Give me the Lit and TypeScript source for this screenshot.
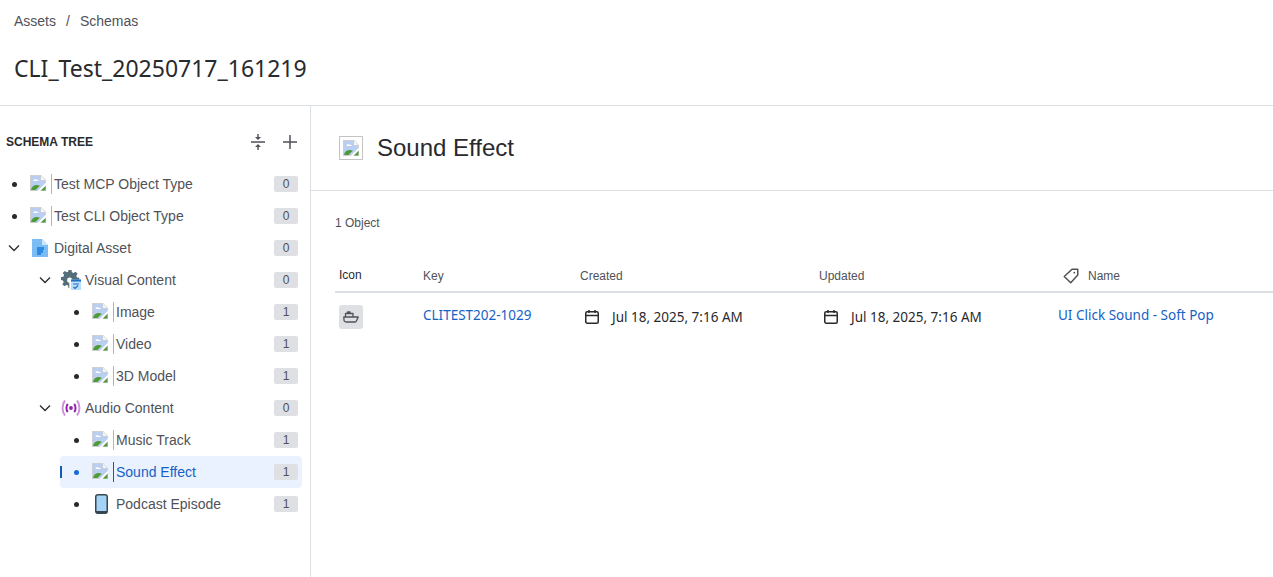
import { LitElement, html, css } from 'lit';
import { customElement } from 'lit/decorators.js';
import { classMap } from 'lit/directives/class-map.js';

type IconKind = 'broken' | 'doc' | 'gear' | 'radio' | 'phone';

interface TreeNode {
  label: string;
  count: number;
  level: number;
  icon: IconKind;
  open?: boolean;
  selected?: boolean;
}

const NODES: TreeNode[] = [
  { label: 'Test MCP Object Type', count: 0, level: 0, icon: 'broken' },
  { label: 'Test CLI Object Type', count: 0, level: 0, icon: 'broken' },
  { label: 'Digital Asset', count: 0, level: 0, icon: 'doc', open: true },
  { label: 'Visual Content', count: 0, level: 1, icon: 'gear', open: true },
  { label: 'Image', count: 1, level: 2, icon: 'broken' },
  { label: 'Video', count: 1, level: 2, icon: 'broken' },
  { label: '3D Model', count: 1, level: 2, icon: 'broken' },
  { label: 'Audio Content', count: 0, level: 1, icon: 'radio', open: true },
  { label: 'Music Track', count: 1, level: 2, icon: 'broken' },
  { label: 'Sound Effect', count: 1, level: 2, icon: 'broken', selected: true },
  { label: 'Podcast Episode', count: 1, level: 2, icon: 'phone' },
];

// chrome's broken image glyph
const brokenImage = html`
  <svg width="16" height="16" viewBox="0 0 16 16">
    <path d="M0 0h11l5 5v11H0z" fill="#cfcfcf" />
    <path d="M1 1h9.500v4.500H15V8.500L8.500 15H1z" fill="#b9cef1" />
    <path d="M11 .8l4.200 4.200H11z" fill="#f6f6f6" />
    <path d="M3.500 5.500c0-1.200 2.200-1.800 3.200-.8 1.100-.2 2 .3 2 1.200H3.500z" fill="#fff" />
    <path d="M1 15c.6-3.400 3.600-5.400 7-4.800l1.800.5L5.500 15z" fill="#4f9a38" />
    <path d="M16 7.500 7.500 16H10l6-6z" fill="#fff" />
    <path d="M15.500 11v4.500H11z" fill="#4f9a38" />
  </svg>
`;

const calendar = html`
  <svg width="16" height="16" viewBox="0 0 16 16" fill="none" stroke="#292a2e" stroke-width="1.500">
    <rect x="1.750" y="2.750" width="12.500" height="11.500" rx="1.500" />
    <path d="M1.750 6.500h12.500M5 1v3M11 1v3" />
  </svg>
`;

@customElement('tree-icon')
export class TreeIcon extends LitElement {
  static properties = { kind: {}, active: { type: Boolean } };
  kind: IconKind = 'broken';
  active = false;

  static styles = css`
    :host {
      display: block;
    }
    .broken {
      box-sizing: border-box;
      width: 22px;
      height: 20px;
      border-right: 1px solid #b4b4b4;
      padding-top: 1px;
      line-height: 0;
    }
    .broken.active {
      border-right-color: #1558bc;
    }
    svg {
      display: block;
    }
  `;

  render() {
    switch (this.kind) {
      case 'doc':
        return html`<svg width="20" height="20" viewBox="0 0 20 20">
          <path d="M2 1h10l6 6v12H2z" fill="#7cbcf4" />
          <path d="M12 1l6 6h-6z" fill="#cfe5fa" />
          <path d="M7 9h7v3H7zM7 12h6v3H7zM7 15h4v2H7z" fill="#2f8ae6" />
        </svg>`;
      case 'gear':
        return html`<svg width="20" height="20" viewBox="0 0 20 20">
          <path
            d="M7.500 0h3l.4 2.300 1.700.7 1.900-1.300 2.100 2.100-1.300 1.900.7 1.700 2.300.4v2.500h-7V9.500a2.700 2.700 0 1 0-3 3.400V18H7.500l-.4-2.400-1.700-.7-2 1.400-2.100-2.100 1.400-2-.7-1.700L0 10.100v-3l2.400-.4.700-1.700-1.400-2 2.100-2.100 2 1.400 1.300-.6z"
            fill="#546e7a"
          />
          <path d="M10 9.500h10V20H10z" fill="#bbdefb" />
          <path d="M10 9.500h10v2H10z" fill="#1e6fc4" />
          <path d="M12 14h6M12.500 17l1.500 1.500 3-3" fill="none" stroke="#1e6fc4" stroke-width="1.200" />
        </svg>`;
      case 'radio':
        return html`<svg width="20" height="18" viewBox="0 0 20 18" fill="none">
          <path d="M4 1.500C.7 5.500.7 12.500 4 16.500M16 1.500c3.300 4 3.300 11 0 15" stroke="#ce93d8" stroke-width="2" />
          <path d="M6.800 5C5 7 5 11 6.800 13M13.200 5c1.800 2 1.800 6 0 8" stroke="#8e24aa" stroke-width="2" />
          <circle cx="10" cy="9" r="1.900" fill="#8e24aa" />
        </svg>`;
      case 'phone':
        return html`<svg width="17" height="20" viewBox="0 0 17 20">
          <rect x="3.750" y="0.750" width="11.500" height="18.500" rx="2.200" fill="#a5d2f7" stroke="#37474f" stroke-width="1.500" />
          <path d="M4 17h11v1a1.500 1.500 0 0 1-1.500 1.500h-8A1.500 1.500 0 0 1 4 18z" fill="#37474f" />
        </svg>`;
      default:
        return html`<div class=${classMap({ broken: true, active: this.active })}>${brokenImage}</div>`;
    }
  }
}

@customElement('app-root')
export class AppRoot extends LitElement {
  static styles = css`
    :host {
      display: block;
      height: 577px;
      overflow: hidden;
      background: #fff;
      color: #292a2e;
      font-family: 'Liberation Sans', Arial, sans-serif;
    }
    .page-head {
      box-sizing: border-box;
      height: 106px;
      padding: 12px 14px 0;
      border-bottom: 1px solid #dcdfe4;
    }
    .crumbs {
      display: flex;
      gap: 10px;
      height: 18px;
      font-size: 14px;
      line-height: 18px;
      color: #505258;
    }
    h1 {
      margin: 21px 0 0;
      font: 400 23px/34px 'Noto Sans', sans-serif;
      color: #292a2e;
    }
    .body {
      display: flex;
      height: 471px;
    }
    .sidebar {
      flex: none;
      box-sizing: border-box;
      width: 311px;
      border-right: 1px solid #dcdfe4;
    }
    .side-head {
      display: flex;
      align-items: center;
      height: 40px;
      margin: 16px 0 6px;
      padding-left: 6px;
      font-size: 12px;
      font-weight: 700;
    }
    .side-head span {
      flex: 1;
    }
    .tool {
      display: flex;
      justify-content: center;
      width: 32px;
    }
    .side-head .tool:last-child {
      margin-right: 4px;
    }
    .tree {
      margin-left: -2px;
    }
    .row {
      position: relative;
      display: flex;
      align-items: center;
      height: 32px;
      padding-right: 4px;
      margin-right: 8px;
      border-radius: 4px;
      font-size: 14px;
      color: #505258;
    }
    .row.selected {
      background: #e9f2fe;
      color: #1662c4;
    }
    .row.selected::before {
      content: '';
      position: absolute;
      left: 0;
      top: 10px;
      width: 2px;
      height: 12px;
      background: #1558bc;
    }
    .twisty {
      flex: none;
      display: flex;
      align-items: center;
      justify-content: center;
      width: 32px;
      height: 32px;
    }
    .dot {
      width: 5px;
      height: 5px;
      border-radius: 50%;
      background: #292a2e;
    }
    .selected .dot {
      background: #1868db;
    }
    .icon {
      flex: none;
      width: 24px;
    }
    .label {
      flex: 1;
    }
    .badge {
      width: 24px;
      height: 16px;
      border-radius: 2px;
      background: #dfe0e3;
      text-align: center;
      font-size: 12px;
      line-height: 16px;
      color: #505258;
    }
    .detail {
      flex: 1;
      min-width: 0;
    }
    .detail-head {
      display: flex;
      align-items: center;
      gap: 14px;
      height: 84px;
      padding-left: 28px;
      border-bottom: 1px solid #dcdfe4;
    }
    .type-box {
      box-sizing: border-box;
      display: flex;
      align-items: center;
      justify-content: center;
      width: 24px;
      height: 24px;
      border: 1px solid #c4c4c4;
    }
    h2 {
      margin: 0;
      font-size: 24px;
      font-weight: 400;
      color: #292a2e;
    }
    .objects {
      padding-left: 24px;
    }
    .total {
      margin: 24px 0 29px;
      font-size: 12px;
      line-height: 16px;
      color: #505258;
    }
    .grid {
      display: grid;
      grid-template-columns: 84px 157px 239px 239px 1fr;
    }
    .th {
      display: flex;
      align-items: center;
      gap: 9px;
      height: 31px;
      padding-left: 4px;
      border-bottom: 2px solid #dcdfe4;
      font-size: 12px;
      color: #505258;
    }
    .th.dark {
      color: #292a2e;
      box-sizing: border-box;
      height: 33px;
      padding-bottom: 1px;
    }
    .th.name {
      padding-left: 9px;
    }
    .td {
      padding: 12px 0 12px 4px;
      font: 13.5px/20px 'Noto Sans', sans-serif;
    }
    .td a {
      color: #1662c4;
      text-decoration: none;
    }
    .obj-icon {
      display: flex;
      align-items: center;
      justify-content: center;
      width: 24px;
      height: 24px;
      border-radius: 3px;
      background: #dfe0e3;
    }
    .date {
      display: flex;
      align-items: center;
      align-self: start;
      gap: 12px;
      padding: 14px 0 0 8px;
      font: 13.5px/20px 'Noto Sans', sans-serif;
      color: #292a2e;
    }
  `;

  private renderNode(node: TreeNode) {
    return html`
      <div class=${classMap({ row: true, selected: !!node.selected })} style="margin-left: ${node.level * 31}px">
        <div class="twisty">
          ${node.open
            ? html`<svg width="16" height="16" viewBox="0 0 16 16" fill="none" stroke="#292a2e" stroke-width="1.300">
                <path d="M3 5.500l5 5 5-5" />
              </svg>`
            : html`<div class="dot"></div>`}
        </div>
        <div class="icon">
          <tree-icon .kind=${node.icon} .active=${!!node.selected}></tree-icon>
        </div>
        <div class="label">${node.label}</div>
        <div class="badge">${node.count}</div>
      </div>
    `;
  }

  render() {
    return html`
      <header class="page-head">
        <nav class="crumbs"><span>Assets</span><span>/</span><span>Schemas</span></nav>
        <h1>CLI_Test_20250717_161219</h1>
      </header>
      <div class="body">
        <aside class="sidebar">
          <div class="side-head">
            <span>SCHEMA TREE</span>
            <div class="tool">
              <svg width="16" height="16" viewBox="0 0 16 16" fill="#505258">
                <path d="M1 7.250h14v1.500H1zM7.300 0h1.400v3H11L8 6 5 3h2.300zM8 10l3 3H8.700v3H7.300v-3H5z" />
              </svg>
            </div>
            <div class="tool">
              <svg width="16" height="16" viewBox="0 0 16 16" fill="#505258">
                <path d="M7.250 1h1.500v6.250H15v1.500H8.750V15h-1.500V8.750H1v-1.500h6.250z" />
              </svg>
            </div>
          </div>
          <div class="tree">${NODES.map((n) => this.renderNode(n))}</div>
        </aside>
        <main class="detail">
          <div class="detail-head">
            <div class="type-box">${brokenImage}</div>
            <h2>Sound Effect</h2>
          </div>
          <section class="objects">
            <div class="total">1 Object</div>
            <div class="grid">
              <div class="th dark">Icon</div>
              <div class="th">Key</div>
              <div class="th">Created</div>
              <div class="th">Updated</div>
              <div class="th name">
                <svg width="16" height="16" viewBox="0 0 16 16" fill="none" stroke="#505258" stroke-width="1.500">
                  <path d="M9 1.250h5.750V7l-7 7.750L1.250 8.500z" stroke-linejoin="round" />
                  <circle cx="11.300" cy="4.700" r="0.900" fill="#505258" stroke="none" />
                </svg>
                Name
              </div>

              <div class="td">
                <div class="obj-icon">
                  <svg width="16" height="16" viewBox="0 0 16 16" fill="none" stroke="#505258" stroke-width="1.300">
                    <path d="M.8 8h14.400l-1.800 4a1.500 1.500 0 0 1-1.400 1H3a2 2 0 0 1-2-2zM2.500 8V4.500h7.500V8M4.500 4.500V3h2.500v1.500" stroke-linejoin="round" />
                  </svg>
                </div>
              </div>
              <div class="td"><a href="#">CLITEST202-1029</a></div>
              <div class="date">${calendar}<span>Jul 18, 2025, 7:16 AM</span></div>
              <div class="date">${calendar}<span>Jul 18, 2025, 7:16 AM</span></div>
              <div class="td"><a href="#">UI Click Sound - Soft Pop</a></div>
            </div>
          </section>
        </main>
      </div>
    `;
  }
}
